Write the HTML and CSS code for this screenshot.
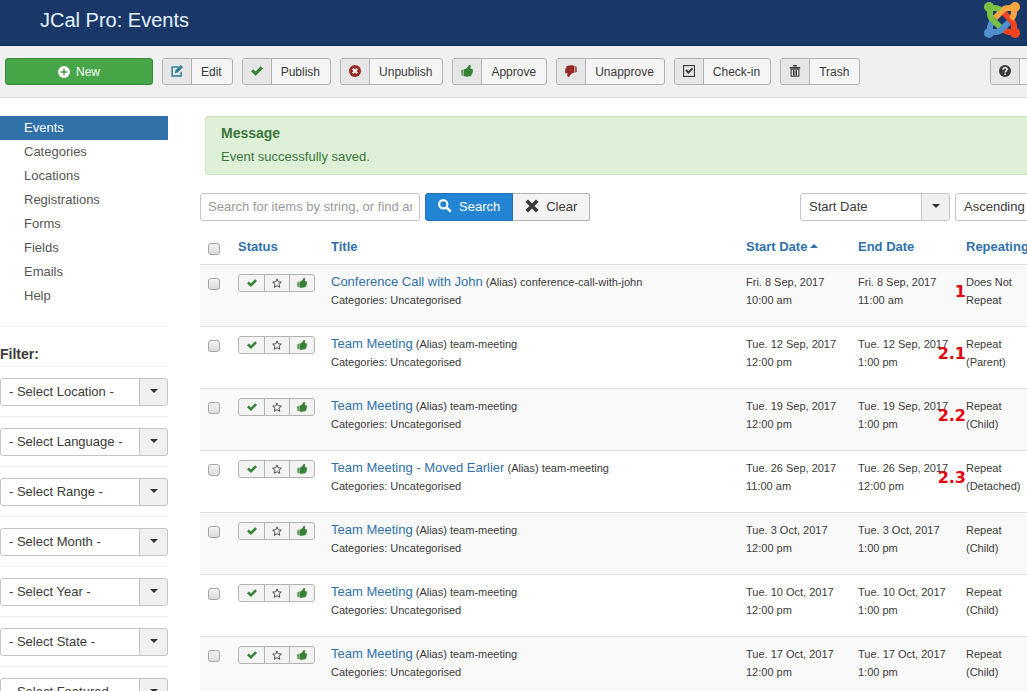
FILE: index.html
```
<!DOCTYPE html>
<html lang="en">

<head>
    <meta charset="UTF-8">
    <meta name="viewport" content="width=device-width, initial-scale=1.0">
    <title>JCal Pro: Events</title>
    <link rel="stylesheet" href="styles.css">
</head>

<body>
    <!-- icon sprite -->
    <svg class="sprite" aria-hidden="true">
        <symbol id="i-plus" viewBox="0 0 16 16">
            <circle cx="8" cy="8" r="8" fill="currentColor" />
            <path d="M8 4v8M4 8h8" stroke="#46a546" stroke-width="2" />
        </symbol>
        <symbol id="i-edit" viewBox="0 0 16 16">
            <path d="M10 2.500H1.500v12h12V9" fill="none" stroke="currentColor" stroke-width="2" />
            <path d="M5 11l1-4 7-7 3 3-7 7z" fill="currentColor" />
        </symbol>
        <symbol id="i-check" viewBox="0 0 16 16">
            <path d="M0 8.500l2.800-2.800 3.400 3L13 1.800 16 4.700 6.300 14.300z" fill="currentColor" />
        </symbol>
        <symbol id="i-cancel" viewBox="0 0 16 16">
            <circle cx="8" cy="8" r="8" fill="currentColor" />
            <path d="M5 5l6 6M11 5l-6 6" stroke="#fff" stroke-width="2.400" />
        </symbol>
        <symbol id="i-thumb" viewBox="0 0 16 16">
            <path d="M0 7l3.500-1.500v9.500L.5 14z" fill="currentColor" opacity=".75" />
            <path d="M4 6C7 5 9 3.500 10 .8c.4-1 2.800-1 3 .8.100 1.300-.3 2.300-.8 3.200l2.400.2c1.600.3 1.700 2 .8 2.700.8.800.6 2-.2 2.600.4 1-.1 2.100-1 2.400 0 1.100-.6 2-1.900 2.200-3 .8-5.800.9-8.300.100z" fill="currentColor" />
        </symbol>
        <symbol id="i-box" viewBox="0 0 16 16">
            <rect x=".75" y=".75" width="14.500" height="14.500" fill="none" stroke="currentColor" stroke-width="1.500" />
            <path d="M3 7.500l1.800-1.700 2.400 2.300 4.600-4.600 1.700 1.700-6.300 6.800z" fill="currentColor" />
        </symbol>
        <symbol id="i-trash" viewBox="0 0 16 16">
            <path d="M1 3.500h14M5.500 1h5" stroke="currentColor" stroke-width="2" />
            <path d="M2.800 5.500h10.400V15H2.800zM6 7v7M8 7v7M10 7v7" fill="none" stroke="currentColor" stroke-width="1.400" />
        </symbol>
        <symbol id="i-help" viewBox="0 0 16 16">
            <circle cx="8" cy="8" r="8" fill="currentColor" />
            <path d="M5.300 6.200C5.300 2.700 11 2.900 10.800 6.100 10.700 8 8.200 7.800 8.200 10M8.200 11.200v2" fill="none" stroke="#fff" stroke-width="2" />
        </symbol>
        <symbol id="i-search" viewBox="0 0 16 16">
            <circle cx="6" cy="6" r="4.700" fill="none" stroke="currentColor" stroke-width="2.400" />
            <path d="M9.500 9.500l5 5" stroke="currentColor" stroke-width="3" />
        </symbol>
        <symbol id="i-clear" viewBox="0 0 16 16">
            <path d="M2 2l12 12M14 2L2 14" stroke="currentColor" stroke-width="4.200" />
        </symbol>
        <symbol id="i-star" viewBox="0 0 16 16">
            <path d="M8 1.500l2 4.600 5 .5-3.800 3.300 1.200 5L8 12.300l-4.400 2.600 1.200-5L1 6.600l5-.5z" fill="none" stroke="currentColor" stroke-width="1.400" />
        </symbol>
    </svg>

    <header class="header">
        <h1 class="page-title">JCal Pro: Events</h1>
        <a href="#" class="logo" aria-label="Joomla">
            <svg viewBox="0 0 36 36" width="36" height="36" fill="none" stroke-width="6">
                <g stroke="#5091cd">
                    <circle cx="5" cy="31" r="5" fill="#5091cd" stroke="none" />
                    <path d="M6 30V26q0-4 3-7M6 30h5q4 0 6-2l8-8" />
                </g>
                <g stroke="#f44321">
                    <circle cx="31" cy="31" r="5" fill="#f44321" stroke="none" />
                    <path d="M30 30h-4q-4 0-7-3M30 30v-5q0-4-2-6l-8-8" />
                </g>
                <g stroke="#f9a541">
                    <circle cx="31" cy="5" r="5" fill="#f9a541" stroke="none" />
                    <path d="M30 6v4q0 4-3 7M30 6h-5q-4 0-6 2l-8 8" />
                </g>
                <g stroke="#7ac143">
                    <circle cx="5" cy="5" r="5" fill="#7ac143" stroke="none" />
                    <path d="M6 6h4q4 0 6 2M6 6v5q0 4 2 6l8 8" />
                </g>
                <path d="M16 29l6-6" stroke="#5091cd" />
            </svg>
        </a>
    </header>

    <div class="toolbar">
        <button class="btn-new"><svg class="icon"><use href="#i-plus" /></svg>New</button>
        <button class="btn-tool"><span class="tool-icon teal"><svg class="icon"><use href="#i-edit" /></svg></span><span class="tool-text">Edit</span></button>
        <button class="btn-tool"><span class="tool-icon green"><svg class="icon"><use href="#i-check" /></svg></span><span class="tool-text">Publish</span></button>
        <button class="btn-tool"><span class="tool-icon red"><svg class="icon"><use href="#i-cancel" /></svg></span><span class="tool-text">Unpublish</span></button>
        <button class="btn-tool"><span class="tool-icon green"><svg class="icon"><use href="#i-thumb" /></svg></span><span class="tool-text">Approve</span></button>
        <button class="btn-tool"><span class="tool-icon red"><svg class="icon flip"><use href="#i-thumb" /></svg></span><span class="tool-text">Unapprove</span></button>
        <button class="btn-tool"><span class="tool-icon"><svg class="icon"><use href="#i-box" /></svg></span><span class="tool-text">Check-in</span></button>
        <button class="btn-tool"><span class="tool-icon"><svg class="icon"><use href="#i-trash" /></svg></span><span class="tool-text">Trash</span></button>
        <button class="btn-tool help" aria-label="Help"><span class="tool-icon"><svg class="icon"><use href="#i-help" /></svg></span><span class="tool-text"></span></button>
    </div>

    <div class="container">
        <aside class="sidebar">
            <nav class="submenu">
                <a href="#" class="active">Events</a>
                <a href="#">Categories</a>
                <a href="#">Locations</a>
                <a href="#">Registrations</a>
                <a href="#">Forms</a>
                <a href="#">Fields</a>
                <a href="#">Emails</a>
                <a href="#">Help</a>
            </nav>
            <h4 class="filter-title">Filter:</h4>
            <div class="filter"><div class="select"><select aria-label="Location"><option>- Select Location -</option></select></div></div>
            <div class="filter"><div class="select"><select aria-label="Language"><option>- Select Language -</option></select></div></div>
            <div class="filter"><div class="select"><select aria-label="Range"><option>- Select Range -</option></select></div></div>
            <div class="filter"><div class="select"><select aria-label="Month"><option>- Select Month -</option></select></div></div>
            <div class="filter"><div class="select"><select aria-label="Year"><option>- Select Year -</option></select></div></div>
            <div class="filter"><div class="select"><select aria-label="State"><option>- Select State -</option></select></div></div>
            <div class="filter"><div class="select"><select aria-label="Featured"><option>- Select Featured -</option></select></div></div>
        </aside>

        <main class="content">
            <div class="alert">
                <h4>Message</h4>
                <p>Event successfully saved.</p>
            </div>

            <form class="searchbar">
                <input type="text" class="search-input" aria-label="Search" placeholder="Search for items by string, or find an item by ID">
                <div class="search-buttons">
                    <button type="button" class="btn-search"><svg class="icon-lg"><use href="#i-search" /></svg>Search</button>
                    <button type="button" class="btn-clear"><svg class="icon-lg"><use href="#i-clear" /></svg>Clear</button>
                </div>
                <div class="ordering">
                    <div class="select"><select aria-label="Order by"><option>Start Date</option></select></div>
                    <div class="select"><select aria-label="Direction"><option>Ascending</option></select></div>
                </div>
            </form>

            <table class="events">
                <colgroup>
                    <col class="col-check">
                    <col class="col-status">
                    <col>
                    <col class="col-start">
                    <col class="col-end">
                    <col class="col-repeat">
                </colgroup>
                <thead>
                    <tr>
                        <th><input type="checkbox" aria-label="Check all"></th>
                        <th><a href="#">Status</a></th>
                        <th><a href="#">Title</a></th>
                        <th><a href="#">Start Date<span class="sort-up"></span></a></th>
                        <th><a href="#">End Date</a></th>
                        <th><a href="#">Repeating</a></th>
                    </tr>
                </thead>
                <tbody>
                    <tr>
                        <td><input type="checkbox" aria-label="Select row"></td>
                        <td>
                            <div class="status">
                                <button aria-label="Published" class="green"><svg><use href="#i-check" /></svg></button>
                                <button aria-label="Featured"><svg><use href="#i-star" /></svg></button>
                                <button aria-label="Approved" class="green"><svg><use href="#i-thumb" /></svg></button>
                            </div>
                        </td>
                        <td><a href="#">Conference Call with John</a> (Alias) conference-call-with-john<br>Categories: Uncategorised</td>
                        <td>Fri. 8 Sep, 2017<br>10:00 am</td>
                        <td>Fri. 8 Sep, 2017<br>11:00 am</td>
                        <td><span class="note">1</span>Does Not<br>Repeat</td>
                    </tr>
                    <tr>
                        <td><input type="checkbox" aria-label="Select row"></td>
                        <td>
                            <div class="status">
                                <button aria-label="Published" class="green"><svg><use href="#i-check" /></svg></button>
                                <button aria-label="Featured"><svg><use href="#i-star" /></svg></button>
                                <button aria-label="Approved" class="green"><svg><use href="#i-thumb" /></svg></button>
                            </div>
                        </td>
                        <td><a href="#">Team Meeting</a> (Alias) team-meeting<br>Categories: Uncategorised</td>
                        <td>Tue. 12 Sep, 2017<br>12:00 pm</td>
                        <td>Tue. 12 Sep, 2017<br>1:00 pm</td>
                        <td><span class="note">2.1</span>Repeat<br>(Parent)</td>
                    </tr>
                    <tr>
                        <td><input type="checkbox" aria-label="Select row"></td>
                        <td>
                            <div class="status">
                                <button aria-label="Published" class="green"><svg><use href="#i-check" /></svg></button>
                                <button aria-label="Featured"><svg><use href="#i-star" /></svg></button>
                                <button aria-label="Approved" class="green"><svg><use href="#i-thumb" /></svg></button>
                            </div>
                        </td>
                        <td><a href="#">Team Meeting</a> (Alias) team-meeting<br>Categories: Uncategorised</td>
                        <td>Tue. 19 Sep, 2017<br>12:00 pm</td>
                        <td>Tue. 19 Sep, 2017<br>1:00 pm</td>
                        <td><span class="note">2.2</span>Repeat<br>(Child)</td>
                    </tr>
                    <tr>
                        <td><input type="checkbox" aria-label="Select row"></td>
                        <td>
                            <div class="status">
                                <button aria-label="Published" class="green"><svg><use href="#i-check" /></svg></button>
                                <button aria-label="Featured"><svg><use href="#i-star" /></svg></button>
                                <button aria-label="Approved" class="green"><svg><use href="#i-thumb" /></svg></button>
                            </div>
                        </td>
                        <td><a href="#">Team Meeting - Moved Earlier</a> (Alias) team-meeting<br>Categories: Uncategorised</td>
                        <td>Tue. 26 Sep, 2017<br>11:00 am</td>
                        <td>Tue. 26 Sep, 2017<br>12:00 pm</td>
                        <td><span class="note">2.3</span>Repeat<br>(Detached)</td>
                    </tr>
                    <tr>
                        <td><input type="checkbox" aria-label="Select row"></td>
                        <td>
                            <div class="status">
                                <button aria-label="Published" class="green"><svg><use href="#i-check" /></svg></button>
                                <button aria-label="Featured"><svg><use href="#i-star" /></svg></button>
                                <button aria-label="Approved" class="green"><svg><use href="#i-thumb" /></svg></button>
                            </div>
                        </td>
                        <td><a href="#">Team Meeting</a> (Alias) team-meeting<br>Categories: Uncategorised</td>
                        <td>Tue. 3 Oct, 2017<br>12:00 pm</td>
                        <td>Tue. 3 Oct, 2017<br>1:00 pm</td>
                        <td>Repeat<br>(Child)</td>
                    </tr>
                    <tr>
                        <td><input type="checkbox" aria-label="Select row"></td>
                        <td>
                            <div class="status">
                                <button aria-label="Published" class="green"><svg><use href="#i-check" /></svg></button>
                                <button aria-label="Featured"><svg><use href="#i-star" /></svg></button>
                                <button aria-label="Approved" class="green"><svg><use href="#i-thumb" /></svg></button>
                            </div>
                        </td>
                        <td><a href="#">Team Meeting</a> (Alias) team-meeting<br>Categories: Uncategorised</td>
                        <td>Tue. 10 Oct, 2017<br>12:00 pm</td>
                        <td>Tue. 10 Oct, 2017<br>1:00 pm</td>
                        <td>Repeat<br>(Child)</td>
                    </tr>
                    <tr>
                        <td><input type="checkbox" aria-label="Select row"></td>
                        <td>
                            <div class="status">
                                <button aria-label="Published" class="green"><svg><use href="#i-check" /></svg></button>
                                <button aria-label="Featured"><svg><use href="#i-star" /></svg></button>
                                <button aria-label="Approved" class="green"><svg><use href="#i-thumb" /></svg></button>
                            </div>
                        </td>
                        <td><a href="#">Team Meeting</a> (Alias) team-meeting<br>Categories: Uncategorised</td>
                        <td>Tue. 17 Oct, 2017<br>12:00 pm</td>
                        <td>Tue. 17 Oct, 2017<br>1:00 pm</td>
                        <td>Repeat<br>(Child)</td>
                    </tr>
                </tbody>
            </table>
        </main>
    </div>
</body>

</html>
```
FILE: styles.css
```
* {
    box-sizing: border-box;
    margin: 0;
    padding: 0;
}

body {
    height: 100vh;
    overflow: hidden;
    background: #fff;
    color: #3a3a3a;
    font-family: "Liberation Sans", Arial, sans-serif;
    font-size: 13px;
    line-height: 18px;
}

a {
    color: #3071a9;
    text-decoration: none;
}

button,
input,
select {
    font: inherit;
    color: inherit;
}

.sprite {
    position: absolute;
    width: 0;
    height: 0;
}

.icon {
    width: 12px;
    height: 12px;
}

.icon-lg {
    width: 14px;
    height: 14px;
    margin-bottom: 2px;
}

.flip {
    transform: rotate(180deg);
}

.green {
    color: #378137;
}

.red {
    color: #942a25;
}

.teal {
    color: #2f7d95;
}

/* header */
.header {
    display: flex;
    align-items: center;
    justify-content: space-between;
    height: 46px;
    padding: 0 7px 6px 40px;
    background: #1a3867;
    border-bottom: 1px solid #17304f;
}

.page-title {
    color: #e6f3ff;
    font-size: 20px;
    font-weight: normal;
    line-height: 24px;
}

.logo svg {
    display: block;
}

/* toolbar */
.toolbar {
    display: flex;
    gap: 9px;
    padding: 12px 5px;
    background: #f0f0f0;
    border-bottom: 1px solid #d8d8d8;
    font-size: 12px;
}

.btn-new,
.btn-tool {
    display: flex;
    flex: none;
    height: 27px;
    border: 1px solid #b0b0b0;
    border-radius: 3px;
    background: #f5f5f5;
    overflow: hidden;
}

.btn-new {
    align-items: center;
    justify-content: center;
    gap: 6px;
    width: 148px;
    background: #46a546;
    border-color: #3b8c3b;
    color: #fff;
}

.tool-icon {
    display: flex;
    align-items: center;
    justify-content: center;
    width: 29px;
    height: 100%;
    padding-bottom: 2px;
    background: #e6e6e6;
    border-right: 1px solid #b0b0b0;
}

.tool-text {
    padding: 0 10px 0 9px;
    line-height: 26px;
}

.help {
    width: 70px;
    margin-left: auto;
    margin-right: -38px;
}

/* layout */
.container {
    display: flex;
    gap: 32px;
    padding-top: 18px;
}

.sidebar {
    flex: none;
    width: 168px;
}

.submenu {
    padding-bottom: 18px;
    border-bottom: 1px solid #eee;
}

.submenu a {
    display: block;
    padding-left: 24px;
    color: #555;
    line-height: 24px;
}

.submenu a.active {
    background: #3071a9;
    color: #fff;
}

.filter-title {
    padding: 16px 0 1px;
    font-size: 14px;
    line-height: 22px;
}

.filter {
    padding: 11px 0 10px;
    border-top: 1px solid #eee;
}

/* dropdowns */
.select {
    position: relative;
    width: 100%;
}

.select select {
    display: block;
    width: 100%;
    height: 28px;
    padding: 0 34px 0 8px;
    appearance: none;
    border: 1px solid #c4c4c4;
    border-radius: 3px;
    background: linear-gradient(to left, #f0f0f0 27px, #c4c4c4 27px, #c4c4c4 28px, #fff 28px);
}

.select::after {
    content: "";
    position: absolute;
    top: 11px;
    right: 10px;
    border: 4px solid transparent;
    border-top-color: #333;
    border-bottom: 0;
    pointer-events: none;
}

/* the list runs past the right edge of the window */
.content {
    flex: 1;
    min-width: 0;
    margin-right: -78px;
}

.alert {
    margin: 0 0 18px 5px;
    padding: 7px 15px 8px;
    background: #dff0d8;
    border: 1px solid #d0e6c3;
    border-radius: 3px;
    color: #3c763d;
}

.alert h4 {
    font-size: 14px;
    margin-bottom: 6px;
}

.searchbar {
    display: flex;
    gap: 5px;
}

.search-input {
    width: 220px;
    height: 28px;
    padding: 0 7px 2px;
    border: 1px solid #c4c4c4;
    border-radius: 3px;
}

.search-input::placeholder {
    color: #999;
}

.search-buttons {
    display: flex;
}

.search-buttons button {
    display: flex;
    align-items: center;
    gap: 7px;
    height: 28px;
    padding: 0 12px;
    border: 1px solid #b3b3b3;
    background: #f3f3f3;
}

.search-buttons .btn-search {
    border-color: #1f6fb2;
    border-radius: 3px 0 0 3px;
    background: #2384d3;
    color: #fff;
}

.search-buttons .btn-clear {
    border-left: 0;
    border-radius: 0 3px 3px 0;
}

.ordering {
    display: flex;
    gap: 5px;
    margin-left: auto;
}

.ordering .select {
    width: 150px;
}

/* events table */
.events {
    width: 100%;
    margin-top: 8px;
    border-collapse: collapse;
    table-layout: fixed;
    font-size: 11px;
}

.col-check {
    width: 30px;
}

.col-status {
    width: 93px;
}

.col-start {
    width: 112px;
}

.col-end {
    width: 108px;
}

.col-repeat {
    width: 147px;
}

.events th {
    padding: 9px 8px 8px;
    font-size: 13px;
    text-align: left;
    vertical-align: top;
}

.events td {
    position: relative;
    height: 62px;
    padding: 8px 8px 17px;
    border-top: 1px solid #ddd;
    vertical-align: top;
    white-space: nowrap;
}

.events td a {
    font-size: 13px;
}

.events tbody tr:nth-child(odd) {
    background: #f9f9f9;
}

.events input {
    display: block;
    width: 12px;
    height: 12px;
    margin-top: 5px;
    appearance: none;
    border: 1px solid #a6a6a6;
    border-radius: 3px;
    background: linear-gradient(#f2f2f2, #dcdcdc);
}

.sort-up {
    display: inline-block;
    margin: 0 0 3px 3px;
    vertical-align: middle;
    border: 4px solid transparent;
    border-bottom-color: #3071a9;
    border-top: 0;
}

.status {
    display: inline-flex;
    height: 18px;
    margin-top: 1px;
    border: 1px solid #b3b3b3;
    border-radius: 3px;
    background: #f3f3f3;
}

.status button {
    display: flex;
    align-items: center;
    justify-content: center;
    width: 25px;
    border: 0;
    background: none;
}

.status button + button {
    border-left: 1px solid #b3b3b3;
}

.status svg {
    width: 10px;
    height: 10px;
}

/* red step numbers over the date column */
.note {
    position: absolute;
    top: 18px;
    right: calc(100% - 8px);
    color: #e3000f;
    font-family: "DejaVu Sans", sans-serif;
    font-size: 16px;
    font-weight: bold;
}
```
